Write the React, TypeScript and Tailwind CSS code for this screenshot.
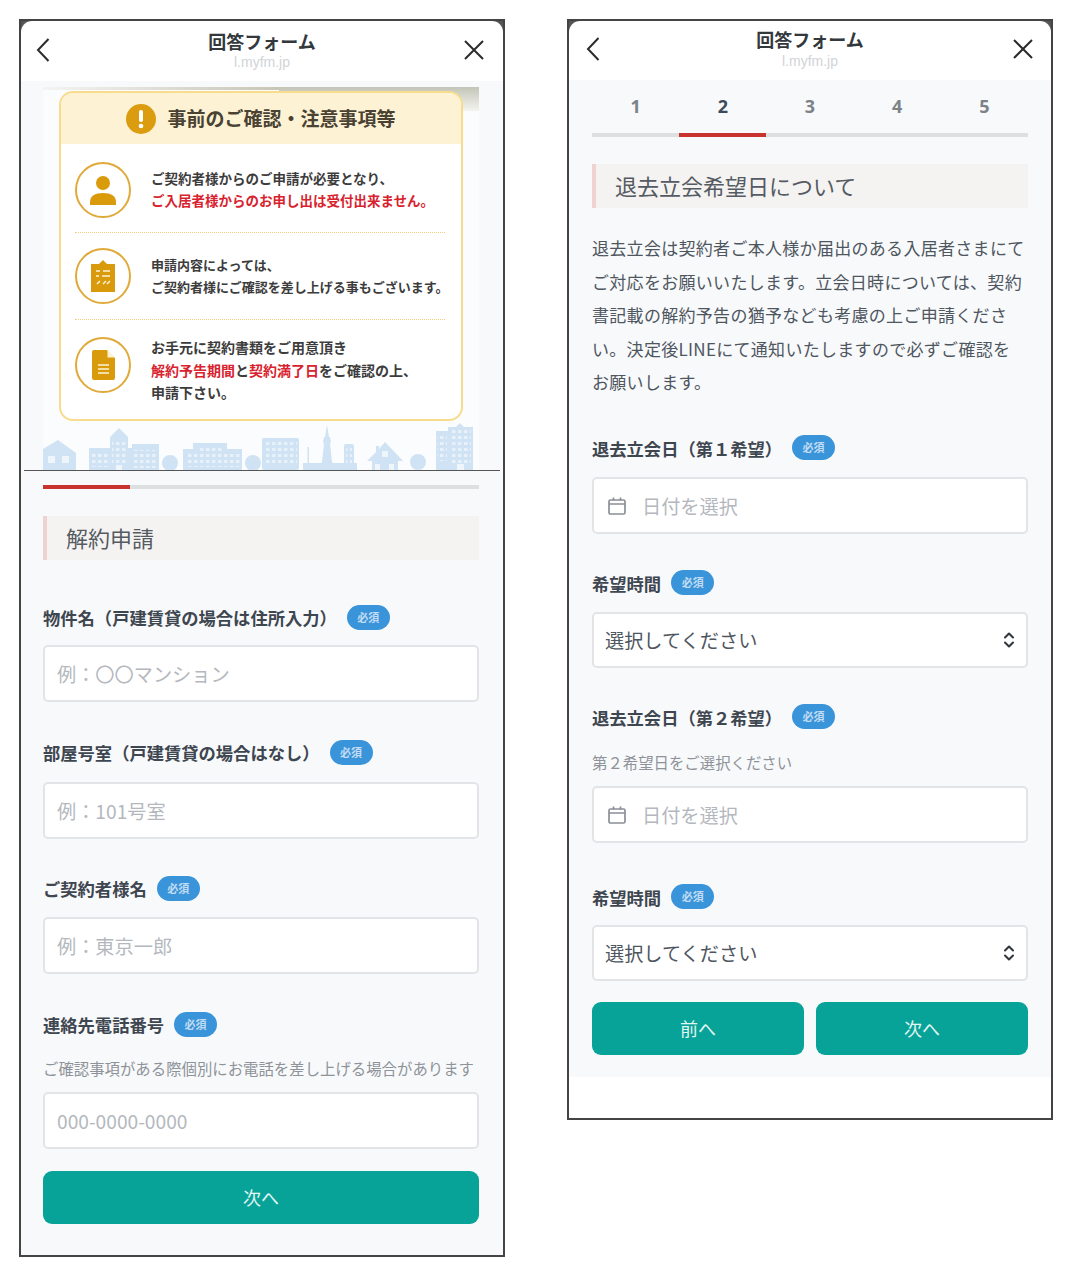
import React from 'react';

const font = { fontFamily: '"Noto Sans CJK JP", "Noto Sans", sans-serif' };

const Badge = () => (
  <span className="ml-[10px] inline-flex h-[25px] w-[43px] items-center justify-center rounded-full bg-[#3a94da] text-[11px] text-[#c2dcf3] -translate-y-[1px]">
    必須
  </span>
);

const Label = ({ text }: { text: string }) => (
  <div className="flex h-[28px] items-center text-[17.3px] font-bold leading-none text-[#3e4650]">
    <span>{text}</span>
    <Badge />
  </div>
);

const TextInput = ({ placeholder, calendar, className = '' }: { placeholder: string; calendar?: boolean; className?: string }) => (
  <div className={`flex h-[57px] items-center rounded-[5px] border-2 border-[#e2e4e7] bg-white pl-[12px] pt-[2px] text-[19.2px] text-[#b4b8be] ${className}`}>
    {calendar && (
      <svg width="20" height="20" viewBox="0 0 20 20" fill="none" stroke="#8b9097" strokeWidth="1.7" className="mr-[15px] ml-[1px]">
        <rect x="2" y="4" width="16" height="14" rx="1.5" />
        <path d="M2 8h16M6.5 1.5v3M13.5 1.5v3" />
      </svg>
    )}
    {placeholder}
  </div>
);

const SelectBox = () => (
  <div className="flex h-[56px] items-center justify-between rounded-[5px] border-2 border-[#e2e4e7] bg-white pl-[11px] pr-[10px] text-[19.2px] text-[#4e5660]">
    <span className="pt-[2px]">選択してください</span>
    <svg width="14" height="18" viewBox="0 0 14 18" fill="none" stroke="#2f353b" strokeWidth="2" strokeLinecap="round" strokeLinejoin="round">
      <path d="M3 6.5 7 2.5l4 4M3 11.5l4 4 4-4" />
    </svg>
  </div>
);

const Header = ({ box, back, close }: { box: string; back: string; close: string }) => (
  <div className={`relative flex flex-col items-center rounded-t-[11px] bg-white ${box}`}>
    <div className="text-[18px] font-bold leading-[26px] text-[#33383d]">回答フォーム</div>
    <div className="text-[14px] leading-[16px] text-[#d2d4d7]" style={{ fontFamily: '"Liberation Sans", sans-serif' }}>l.myfm.jp</div>
    <svg className={`absolute ${back}`} width="16" height="26" viewBox="0 0 16 26" fill="none" stroke="#2b2b2b" strokeWidth="2">
      <path d="M13.5 2 3 13l10.5 11" />
    </svg>
    <svg className={`absolute ${close}`} width="22" height="22" viewBox="0 0 22 22" fill="none" stroke="#2b2b2b" strokeWidth="2">
      <path d="M2 2l18 18M20 2 2 20" />
    </svg>
  </div>
);

const Section = ({ text }: { text: string }) => (
  <div className="flex h-[44px] items-center border-l-[4px] border-[#f0d2d0] bg-[#f5f3f2] pb-[1px] pl-[19px] text-[22px] text-[#555b62]">
    {text}
  </div>
);

const Circle = ({ children, className = '' }: { children: React.ReactNode; className?: string }) => (
  <div className={`flex h-[56px] w-[56px] shrink-0 items-center justify-center rounded-full border-2 border-[#e0aa3a] ${className}`}>
    {children}
  </div>
);

const Skyline = () => (
  <svg width="436" height="47" viewBox="0 0 436 47" className="block">
    <defs>
      <pattern id="win" width="6" height="6" patternUnits="userSpaceOnUse">
        <rect x="1" y="1" width="3.5" height="3" fill="#e8f1f9" />
      </pattern>
    </defs>
    <g fill="#cfe3f5">
      {/* house */}
      <path d="M0 30V26L15 17l18 13v17H0z" />
      {/* block with tower */}
      <rect x="46" y="25" width="21" height="22" />
      <path d="M67 14 76 5l9 9v33H67z" />
      <rect x="89" y="21" width="27" height="26" />
      <rect x="85" y="25" width="4" height="22" />
      <circle cx="127" cy="40" r="8" />
      {/* long block */}
      <rect x="140" y="26" width="59" height="21" />
      <rect x="150" y="20" width="34" height="27" />
      <circle cx="210" cy="40" r="8" />
      <rect x="219" y="15" width="37" height="32" rx="2" />
      {/* tower and low town */}
      <rect x="260" y="40" width="54" height="7" />
      <rect x="264.5" y="24" width="1.5" height="18" />
      <path d="M284 2 286 14h1l1 5-1 2 3 26h-12l3-26-1-2 1-5h1z" />
      <rect x="301" y="21" width="10" height="26" rx="2" />
      {/* second house */}
      <path d="M324 38 333 29v-6h3v3l6-7 18 19h-5v9h-26v-9z" />
      <circle cx="375" cy="39" r="8" />
      {/* tall right */}
      <rect x="393" y="8" width="12" height="39" />
      <path d="M405 4h8l4-4 4 4h9v43h-25z" />
    </g>
    <g fill="#eef5fb">
      <rect x="5" y="33" width="7" height="7" />
      <rect x="19" y="33" width="7" height="7" />
      <rect x="339" y="28" width="6" height="6" />
      <rect x="332" y="41" width="5" height="6" />
      <rect x="346" y="41" width="5" height="6" />
      <rect x="414" y="41" width="7" height="6" />
      <rect x="73" y="42" width="6" height="5" />
    </g>
    <g fill="url(#win)">
      <rect x="48" y="28" width="18" height="16" />
      <rect x="69" y="16" width="14" height="24" />
      <rect x="91" y="27" width="24" height="18" />
      <rect x="143" y="29" width="54" height="15" />
      <rect x="155" y="22" width="24" height="6" />
      <rect x="222" y="18" width="32" height="24" />
      <rect x="303" y="25" width="6" height="18" />
      <rect x="394" y="11" width="10" height="27" />
      <rect x="407" y="7" width="21" height="33" />
    </g>
  </svg>
);

const LeftPhone = () => (
  <div className="h-[1238px] w-[486px] border-2 border-[#444444] bg-[#555555]">
    <Header box="h-[60px] pt-[7px]" back="left-[14px] top-[16px]" close="right-[18px] top-[18px]" />
    <div className="h-[1174px] bg-[#f8f9fb] pl-[22px] pr-[24px] pt-[6px]">
      {/* hero */}
      <div className="relative h-[383px] w-[436px] bg-[#fbfcfd]">
        <div className="absolute right-0 top-0 h-[24px] w-[200px] bg-gradient-to-b from-[#c4c5b8] to-[#f4f4f0]" />
        <div className="absolute left-0 top-0 h-[3px] w-[236px] bg-gradient-to-r from-[#f4f4f4] to-[#c9c6b5]" />
        <div className="absolute bottom-0 left-0"><Skyline /></div>
        <div className="absolute left-[16px] top-[4px] h-[330px] w-[404px] overflow-hidden rounded-[14px] border-2 border-[#f8dc8e] bg-white">
          <div className="flex h-[51px] items-center justify-center gap-[11px] bg-[#fdf3d4] text-[19px] font-bold text-[#4a4233]">
            <svg width="30" height="30" viewBox="0 0 30 30">
              <circle cx="15" cy="15" r="15" fill="#dc9c10" />
              <rect x="13" y="6" width="4" height="12" rx="2" fill="#fff" />
              <circle cx="15" cy="22" r="2.3" fill="#fff" />
            </svg>
            事前のご確認・注意事項等
          </div>
          <div className="pl-[14px] pr-[16px] font-bold text-[#3c3c3c]">
            <div className="flex h-[89px] items-center gap-[20px] border-b border-dotted border-[#f0d27e] pt-[3px] text-[13.5px] leading-[21.5px]">
              <Circle>
                <svg width="28" height="30" viewBox="0 0 28 30" fill="#d99a0c">
                  <circle cx="14" cy="8" r="7" />
                  <path d="M1 30v-3c0-6 5-9 13-9s13 3 13 9v3z" />
                </svg>
              </Circle>
              <div>
                <div>ご契約者様からのご申請が必要となり、</div>
                <div className="text-[#d8232f]">ご入居者様からのお申し出は受付出来ません。</div>
              </div>
            </div>
            <div className="flex h-[87px] items-center gap-[20px] border-b border-dotted border-[#f0d27e] text-[13px] leading-[22px]">
              <Circle>
                <svg width="24" height="32" viewBox="0 0 24 32">
                  <path d="M0 4h8l4-4 4 4h8v28H0z" fill="#d99a0c" />
                  <path d="M5 11h4M12 11h7M5 16h3M11 16h8M6 24l3-3M12 24l3-3M16 24l3-3" stroke="#fdf3d4" strokeWidth="1.5" fill="none" />
                </svg>
              </Circle>
              <div className="whitespace-nowrap">
                <div>申請内容によっては、</div>
                <div>ご契約者様にご確認を差し上げる事もございます。</div>
              </div>
            </div>
            <div className="flex h-[100px] items-center gap-[20px] text-[14px] leading-[22.5px]">
              <Circle className="-translate-y-[5px]">
                <svg width="23" height="30" viewBox="0 0 23 30">
                  <path d="M2 0h13l8 8v20a2 2 0 0 1-2 2H2a2 2 0 0 1-2-2V2a2 2 0 0 1 2-2z" fill="#d99a0c" />
                  <path d="M15.5 0v7.5H23" fill="#fdf3d4" />
                  <path d="M6 15h11M6 19h11M6 23h11" stroke="#fdf3d4" strokeWidth="1.6" />
                </svg>
              </Circle>
              <div>
                <div>お手元に契約書類をご用意頂き</div>
                <div><span className="text-[#d8232f]">解約予告期間</span>と<span className="text-[#d8232f]">契約満了日</span>をご確認の上、</div>
                <div>申請下さい。</div>
              </div>
            </div>
          </div>
        </div>
      </div>
      <div className="-ml-[19px] -mr-[21px] h-px bg-[#555555]" />
      <div className="mt-[14px] h-[4px] bg-[#dddfe1]"><div className="h-full w-[87px] bg-[#c8332f]" /></div>
      <div className="mt-[27px]"><Section text="解約申請" /></div>

      <div className="mt-[44px]"><Label text="物件名（戸建賃貸の場合は住所入力）" /></div>
      <TextInput className="mt-[13px]" placeholder="例：〇〇マンション" />
      <div className="mt-[37px]"><Label text="部屋号室（戸建賃貸の場合はなし）" /></div>
      <TextInput className="mt-[15px]" placeholder="例：101号室" />
      <div className="mt-[36px]"><Label text="ご契約者様名" /></div>
      <TextInput className="mt-[14px]" placeholder="例：東京一郎" />
      <div className="mt-[37px]"><Label text="連絡先電話番号" /></div>
      <div className="mt-[18px] text-[15.4px] leading-[22px] text-[#8e9399]">ご確認事項がある際個別にお電話を差し上げる場合があります</div>
      <TextInput className="mt-[13px]" placeholder="000-0000-0000" />
      <div className="mt-[22px] flex h-[53px] items-center justify-center rounded-[9px] bg-[#07a398] text-[18px] text-[#e2f5f3]">次へ</div>
    </div>
  </div>
);

const RightPhone = () => (
  <div className="h-[1101px] w-[486px] border-2 border-[#444444] bg-[#555555]">
    <Header box="h-[59px] gap-[1px] pt-[5px]" back="left-[16px] top-[15px]" close="right-[17px] top-[17px]" />
    <div className="h-[1038px] bg-white">
      <div className="h-[997px] bg-[#f8f9fb] px-[23px]">
        <div className="grid h-[53px] grid-cols-5 items-center text-center text-[18px] font-bold text-[#7b8288]" style={{ fontFamily: '"Noto Sans", sans-serif' }}>
          <span>1</span>
          <span className="text-[#3f4a58]">2</span>
          <span>3</span>
          <span>4</span>
          <span>5</span>
        </div>
        <div className="h-[4px] bg-[#dddfe1]"><div className="ml-[87px] h-full w-[87px] bg-[#c8332f]" /></div>
        <div className="mt-[27px]"><Section text="退去立会希望日について" /></div>
        <p className="mt-[23px] text-[17px] leading-[33.5px] tracking-[0.3px] text-[#4e5660]">
          退去立会は契約者ご本人様か届出のある入居者さまにて<br />
          ご対応をお願いいたします。立会日時については、契約<br />
          書記載の解約予告の猶予なども考慮の上ご申請くださ<br />
          い。決定後LINEにて通知いたしますので必ずご確認を<br />
          お願いします。
        </p>
        <div className="mt-[36px]"><Label text="退去立会日（第１希望）" /></div>
        <TextInput className="mt-[14px]" placeholder="日付を選択" calendar />
        <div className="mt-[36px]"><Label text="希望時間" /></div>
        <div className="mt-[14px]"><SelectBox /></div>
        <div className="mt-[36px]"><Label text="退去立会日（第２希望）" /></div>
        <div className="mt-[19px] text-[15.4px] leading-[22px] text-[#8e9399]">第２希望日をご選択ください</div>
        <div className="mt-[13px]"><TextInput placeholder="日付を選択" calendar /></div>
        <div className="mt-[41px]"><Label text="希望時間" /></div>
        <div className="mt-[13px]"><SelectBox /></div>
        <div className="mt-[21px] flex gap-[12px]">
          <div className="flex h-[53px] flex-1 items-center justify-center rounded-[9px] bg-[#07a398] text-[18px] text-[#e2f5f3]">前へ</div>
          <div className="flex h-[53px] flex-1 items-center justify-center rounded-[9px] bg-[#07a398] text-[18px] text-[#e2f5f3]">次へ</div>
        </div>
      </div>
    </div>
  </div>
);

export default function App() {
  return (
    <div className="flex min-h-[1272px] items-start gap-[62px] bg-white pl-[19px] pt-[19px]" style={font}>
      <LeftPhone />
      <RightPhone />
    </div>
  );
}
